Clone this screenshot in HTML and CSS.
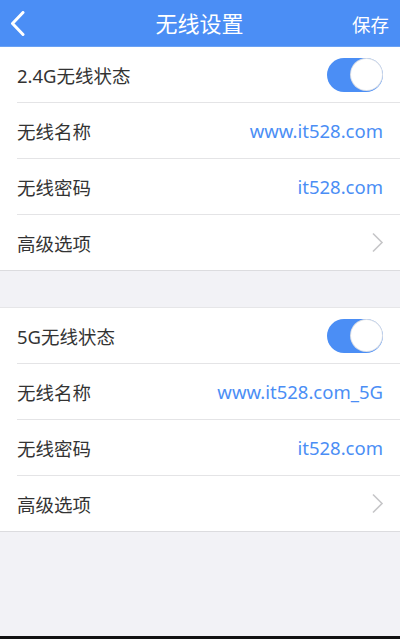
FILE: index.html
```html
<!DOCTYPE html>
<html lang="zh-CN">
<head>
<meta charset="utf-8">
<title>无线设置</title>
<link rel="stylesheet" href="styles.css">
</head>
<body>
<div class="screen">
  <header class="topbar">
    <span class="back">
      <svg width="16" height="26" viewBox="0 0 16 26"><polyline points="13,1.5 2.5,12.5 13,23.5" fill="none" stroke="#fff" stroke-width="3" stroke-linecap="round" stroke-linejoin="round"/></svg>
    </span>
    <h1 class="title">无线设置</h1>
    <span class="save">保存</span>
  </header>

  <section class="group">
    <div class="row">
      <span class="label">2.4G无线状态</span>
      <span class="toggle"><span class="knob"></span></span>
    </div>
    <div class="row">
      <span class="label">无线名称</span>
      <span class="value">www.it528.com</span>
    </div>
    <div class="row">
      <span class="label">无线密码</span>
      <span class="value">it528.com</span>
    </div>
    <div class="row last">
      <span class="label">高级选项</span>
      <svg class="chev" width="13" height="21" viewBox="0 0 13 21"><polyline points="2,1.5 11,10.5 2,19.5" fill="none" stroke="#c6c6c8" stroke-width="1.6"/></svg>
    </div>
  </section>

  <section class="group">
    <div class="row">
      <span class="label">5G无线状态</span>
      <span class="toggle"><span class="knob"></span></span>
    </div>
    <div class="row">
      <span class="label">无线名称</span>
      <span class="value">www.it528.com_5G</span>
    </div>
    <div class="row">
      <span class="label">无线密码</span>
      <span class="value">it528.com</span>
    </div>
    <div class="row last">
      <span class="label">高级选项</span>
      <svg class="chev" width="13" height="21" viewBox="0 0 13 21"><polyline points="2,1.5 11,10.5 2,19.5" fill="none" stroke="#c6c6c8" stroke-width="1.6"/></svg>
    </div>
  </section>
  <div class="filler"></div>
  <div class="bottombar"></div>
</div>
</body>
</html>
```
FILE: styles.css
```css
html, body {
  margin: 0;
  padding: 0;
}
body {
  background: #f2f2f6;
  font-family: "Noto Sans", "Noto Sans CJK SC", sans-serif;
}
.screen {
  width: 400px;
  height: 639px;
  display: flex;
  flex-direction: column;
  background: #f2f2f6;
  overflow: hidden;
}
.topbar {
  flex: none;
  background: #4b8ef5;
  display: flex;
  align-items: center;
  justify-content: space-between;
  padding: 0 11px 0 10px;
  border-bottom: 1px solid #6aa2f4;
  box-sizing: border-box;
  height: 47px;
}
.back {
  width: 60px;
  display: flex;
  align-items: center;
  margin-top: 1px;
}
.title {
  margin: 0;
  font-size: 22px;
  font-weight: normal;
  color: #fff;
  font-family: "Noto Sans CJK SC", sans-serif;
  margin-top: -3px;
}
.save {
  width: 60px;
  text-align: right;
  font-size: 18.5px;
  color: #fff;
  font-family: "Noto Sans CJK SC", sans-serif;
  margin-top: 1px;
}
.group {
  background: #fff;
  padding-left: 17px;
  border-bottom: 1px solid #dcdcdf;
}
.group + .group {
  margin-top: 36px;
  border-top: 1px solid #e6e6e8;
}
.row {
  height: 56px;
  box-sizing: border-box;
  display: flex;
  align-items: center;
  justify-content: space-between;
  padding-right: 17px;
  border-bottom: 1px solid #e4e4e6;
}
.row.last {
  border-bottom: none;
  height: 55px;
}
.label {
  font-size: 18.5px;
  color: #333;
  font-family: "Noto Sans", "Noto Sans CJK SC", sans-serif;
}
.value {
  font-size: 18.5px;
  color: #4b8ef5;
  font-family: "Noto Sans", sans-serif;
}
.toggle {
  width: 56px;
  height: 34px;
  border-radius: 17px;
  background: #4b8ef5;
  display: flex;
  align-items: center;
  justify-content: flex-end;
  padding: 1px;
  box-sizing: border-box;
}
.knob {
  width: 31px;
  height: 31px;
  border-radius: 50%;
  background: #fff;
  box-shadow: 0 0 0 1px #d8dde6;
}
.chev {
  margin-right: -1px;
}
.filler {
  flex: 1;
}
.bottombar {
  height: 3px;
  flex: none;
  background: #111;
}
```
